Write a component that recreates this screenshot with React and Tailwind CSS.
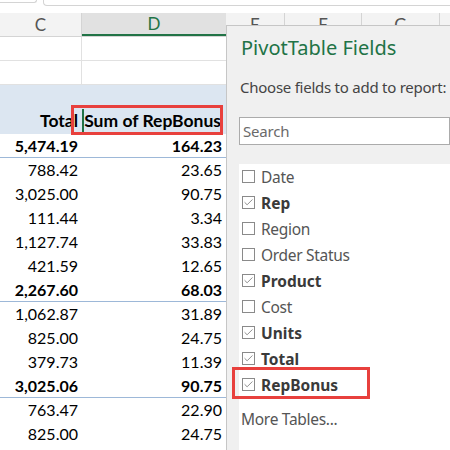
import { Check } from "lucide-react";

const rows = [
  { c: "5,474.19", d: "164.23", bold: true },
  { c: "788.42", d: "23.65" },
  { c: "3,025.00", d: "90.75" },
  { c: "111.44", d: "3.34" },
  { c: "1,127.74", d: "33.83" },
  { c: "421.59", d: "12.65" },
  { c: "2,267.60", d: "68.03", bold: true },
  { c: "1,062.87", d: "31.89" },
  { c: "825.00", d: "24.75" },
  { c: "379.73", d: "11.39" },
  { c: "3,025.06", d: "90.75", bold: true },
  { c: "763.47", d: "22.90" },
  { c: "825.00", d: "24.75" },
  { c: "", d: "" },
];

const fields = [
  { name: "Date" },
  { name: "Rep", on: true },
  { name: "Region" },
  { name: "Order Status" },
  { name: "Product", on: true },
  { name: "Cost" },
  { name: "Units", on: true },
  { name: "Total", on: true },
  { name: "RepBonus", on: true },
];

function FieldRow({ field }) {
  return (
    <div className="flex h-[26px] items-center gap-[6px] pl-[3px]">
      <span className="mb-[4px] flex h-[13px] w-[13px] items-center justify-center border border-[#8a8a8a] bg-white">
        {field.on && <Check size={11} strokeWidth={1.6} className="text-[#666]" />}
      </span>
      <span
        className={
          field.on
            ? "text-[15.5px] font-bold text-[#3a3a3a]"
            : "text-[15.5px] tracking-[-0.3px] text-[#555]"
        }
      >
        {field.name}
      </span>
    </div>
  );
}

function FieldsPanel() {
  return (
    <div className="absolute left-[226px] top-[25px] flex h-[425px] w-[224px] flex-col border-l border-t border-[#c6c6c6] bg-[#f0f0f0] font-['Noto_Sans',sans-serif]">
      <div className="h-[8px]" />
      <div className="pl-[14px] text-[20px] leading-[28px] text-[#217346]">
        PivotTable Fields
      </div>
      <div className="h-[13px]" />
      <div className="whitespace-nowrap pl-[13px] text-[15px] leading-[24px] tracking-[-0.25px] text-[#444]">
        Choose fields to add to report:
      </div>
      <div className="h-[18px]" />
      <div className="ml-[12px] flex h-[28px] items-center border border-[#ababab] bg-white pl-[3px] text-[15px] tracking-[-0.2px] text-[#6a6a6a]">
        Search
      </div>
      <div className="h-[19px]" />
      <div className="ml-[12px] flex-1 bg-white pt-[1px]">
        {fields.map((f) => (
          <FieldRow key={f.name} field={f} />
        ))}
        <div className="pl-[2px] pt-[9px] text-[15.5px] tracking-[-0.3px] text-[#555]">More Tables...</div>
      </div>
    </div>
  );
}

export default function App() {
  return (
    <div className="relative h-[450px] w-[450px] overflow-hidden bg-white font-['Lato',sans-serif] text-[16px] text-black">
      {/* formula bar edge */}
      <div className="flex h-[13px] items-start">
        <div className="h-[3px] w-[37px] rounded-br-[4px] border-b border-r border-[#d4d4d4]" />
        <div className="ml-[6px] h-[6px] flex-1 rounded-bl-[4px] border-b border-l border-[#d4d4d4]" />
      </div>

      {/* column headers */}
      <div className="flex h-[24px] border-b border-[#d4d4d4] bg-[#f3f3f3] text-[17px]">
        <div className="flex w-[82px] items-center justify-center border-r border-[#d4d4d4] text-[#555]">
          C
        </div>
        <div className="flex w-[144px] items-center justify-center border-b-2 border-[#217346] bg-[#e1e1e1] text-[#217346]">
          D
        </div>
        <div className="flex w-[59px] items-center justify-center border-r border-[#d4d4d4] text-[#555]">E</div>
        <div className="flex w-[77px] items-center justify-center border-r border-[#d4d4d4] text-[#555]">F</div>
        <div className="flex w-[78px] items-center justify-center border-r border-[#d4d4d4] text-[#555]">G</div>
      </div>

      {/* empty rows */}
      {[0, 1].map((i) => (
        <div key={i} className="flex h-[24px] border-b border-[#e1e1e1]">
          <div className="w-[82px] border-r border-[#e1e1e1]" />
          <div className="w-[144px]" />
        </div>
      ))}

      {/* pivot header band */}
      <div className="flex h-[49px] w-[226px] flex-col bg-[#dce6f1]">
        <div className="h-[24px]" />
        <div className="flex h-[25px] text-[17.5px] font-bold">
          <div className="flex w-[82px] items-center justify-end pr-[4px]">Total</div>
          <div className="relative flex w-[144px] items-center justify-end pr-[5px]">
            <div className="absolute inset-y-0 left-0 right-[3px] border-b-2 border-l-2 border-[#217346]" />
            Sum of RepBonus
          </div>
        </div>
      </div>

      {/* values */}
      {rows.map((r, i) => (
        <div
          key={i}
          className={
            "flex h-[24px] w-[226px] " +
            (r.bold ? "border-b border-[#9db8d8] font-bold" : "")
          }
        >
          <div className="flex w-[82px] items-center justify-end pr-[4px]">{r.c}</div>
          <div className="flex w-[144px] items-center justify-end pr-[4px]">{r.d}</div>
        </div>
      ))}

      <FieldsPanel />

      {/* highlight boxes */}
      <div className="absolute left-[71px] top-[105px] h-[30px] w-[152px] border-[3px] border-[#e8403d]" />
      <div className="absolute left-[232px] top-[367px] h-[32px] w-[138px] border-[3px] border-[#e8403d]" />
    </div>
  );
}
